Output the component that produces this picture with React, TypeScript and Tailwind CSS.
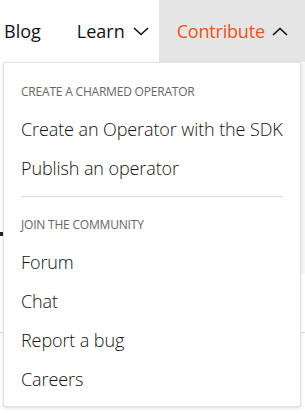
const SECTIONS = [
  {
    title: "Create a charmed operator",
    links: ["Create an Operator with the SDK", "Publish an operator"],
  },
  {
    title: "Join the community",
    links: ["Forum", "Chat", "Report a bug", "Careers"],
  },
];

function Chevron({ up = false }: { up?: boolean }) {
  return (
    <svg width="16" height="9" viewBox="0 0 16 9" fill="none" stroke="#111" strokeWidth="1.6">
      <path d={up ? "M1 8 8 1.5 15 8" : "M1 1 8 7.5 15 1"} />
    </svg>
  );
}

export default function App() {
  return (
    <div
      className="relative w-[305px] h-[413px] overflow-hidden bg-white text-[#111]"
      style={{ fontFamily: '"Open Sans", "Noto Sans", sans-serif' }}
    >
      {/* Top navigation */}
      <nav className="flex h-[62px] items-stretch text-[18px]">
        <a className="flex items-center pl-[4px] pr-[36px]">Blog</a>
        <a className="flex items-center gap-[8px] pr-[10px]">
          Learn
          <Chevron />
        </a>
        <a className="flex flex-1 items-center gap-[7px] bg-[#e5e5e5] pl-[18px] tracking-[-0.2px] text-[#e95420]">
          Contribute
          <Chevron up />
        </a>
      </nav>

      {/* Page content behind the menu */}
      <div className="flex">
        <div className="flex-1 pt-[170px]">
          <div className="h-[4px] w-[3px] bg-[#222]" />
        </div>
        <div className="h-[212px] w-[10px] bg-[#f7f7f7]" />
      </div>
      <div className="mt-[58px] h-px bg-[#d9d9d9]" />

      {/* Dropdown */}
      <div className="absolute left-[3px] top-[62px] w-[298px] rounded-b-[3px] border border-[#e2e2e2] bg-white px-[17px] pb-[8px] pt-[21px] shadow-[0_1px_3px_rgba(0,0,0,0.15)]">
        {SECTIONS.map((section, i) => (
          <div key={section.title}>
            {i > 0 && <div className="mb-[20px] mt-[9px] h-px bg-[#d9d9d9]" />}
            <h3 className="mb-[9px] text-[12px] uppercase leading-[16px] tracking-[-0.2px] text-[#666]">
              {section.title}
            </h3>
            <ul>
              {section.links.map((link) => (
                <li
                  key={link}
                  className="flex h-[39px] items-center whitespace-nowrap text-[18px] font-light leading-none tracking-[-0.1px]"
                >
                  {link}
                </li>
              ))}
            </ul>
          </div>
        ))}
      </div>
    </div>
  );
}
